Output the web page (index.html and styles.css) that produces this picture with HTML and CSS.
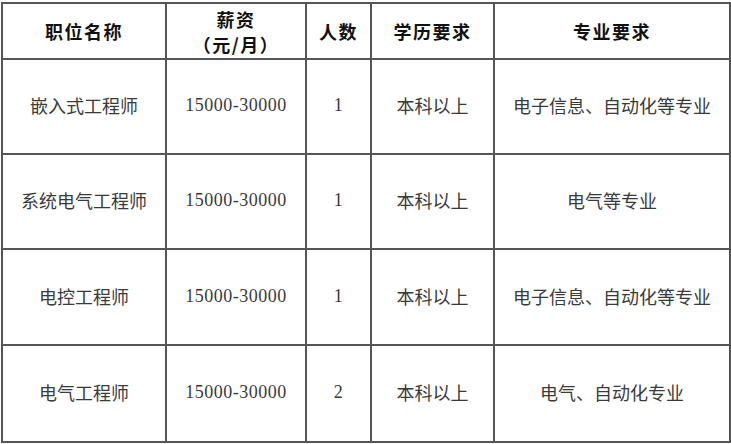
FILE: index.html
```html
<!DOCTYPE html>
<html lang="zh-CN">
<head>
<meta charset="utf-8">
<title>招聘岗位</title>
<link rel="stylesheet" href="styles.css">
</head>
<body>
<div class="page">
<table class="jobs">
  <colgroup>
    <col class="c-name">
    <col class="c-pay">
    <col class="c-num">
    <col class="c-edu">
    <col class="c-major">
  </colgroup>
  <thead>
    <tr class="head">
      <th>职位名称</th>
      <th class="two">薪资<br>（元/月）</th>
      <th>人数</th>
      <th>学历要求</th>
      <th>专业要求</th>
    </tr>
  </thead>
  <tbody>
    <tr class="r1">
      <td>嵌入式工程师</td>
      <td class="num">15000-30000</td>
      <td class="num">1</td>
      <td>本科以上</td>
      <td>电子信息、自动化等专业</td>
    </tr>
    <tr class="r2">
      <td>系统电气工程师</td>
      <td class="num">15000-30000</td>
      <td class="num">1</td>
      <td>本科以上</td>
      <td>电气等专业</td>
    </tr>
    <tr class="r3">
      <td>电控工程师</td>
      <td class="num">15000-30000</td>
      <td class="num">1</td>
      <td>本科以上</td>
      <td>电子信息、自动化等专业</td>
    </tr>
    <tr class="r4">
      <td>电气工程师</td>
      <td class="num">15000-30000</td>
      <td class="num">2</td>
      <td>本科以上</td>
      <td>电气、自动化专业</td>
    </tr>
  </tbody>
</table>
</div>
</body>
</html>
```

FILE: styles.css
```css
html, body {
  margin: 0;
  padding: 0;
  background: #ffffff;
}
.page {
  padding: 2px 0 0 1px;
}
.jobs {
  border-collapse: collapse;
  table-layout: fixed;
  width: 728px;
  font-family: "Noto Sans CJK SC", "Noto Sans", sans-serif;
  color: #3a3a3a;
}
.c-name { width: 164px; }
.c-pay { width: 140px; }
.c-num { width: 65px; }
.c-edu { width: 123px; }
.c-major { width: 236px; }
.jobs th,
.jobs td {
  border: 2px solid #555555;
  text-align: center;
  vertical-align: middle;
  padding: 0;
}
.jobs th {
  font-weight: 700;
  font-size: 18px;
  letter-spacing: 1.5px;
  color: #111111;
  line-height: 26px;
}
.jobs th.two {
  line-height: 25px;
  padding-top: 1px;
}
.jobs td {
  font-size: 18px;
  font-weight: 400;
  line-height: 24px;
  padding-bottom: 3px;
}
.jobs td.num {
  font-family: "Liberation Serif", "Noto Sans CJK SC", serif;
  font-size: 18px;
  letter-spacing: 0.5px;
}
.head { height: 56px; }
.r1 { height: 95px; }
.r2 { height: 95px; }
.r3 { height: 96px; }
.r4 { height: 97px; }
```
